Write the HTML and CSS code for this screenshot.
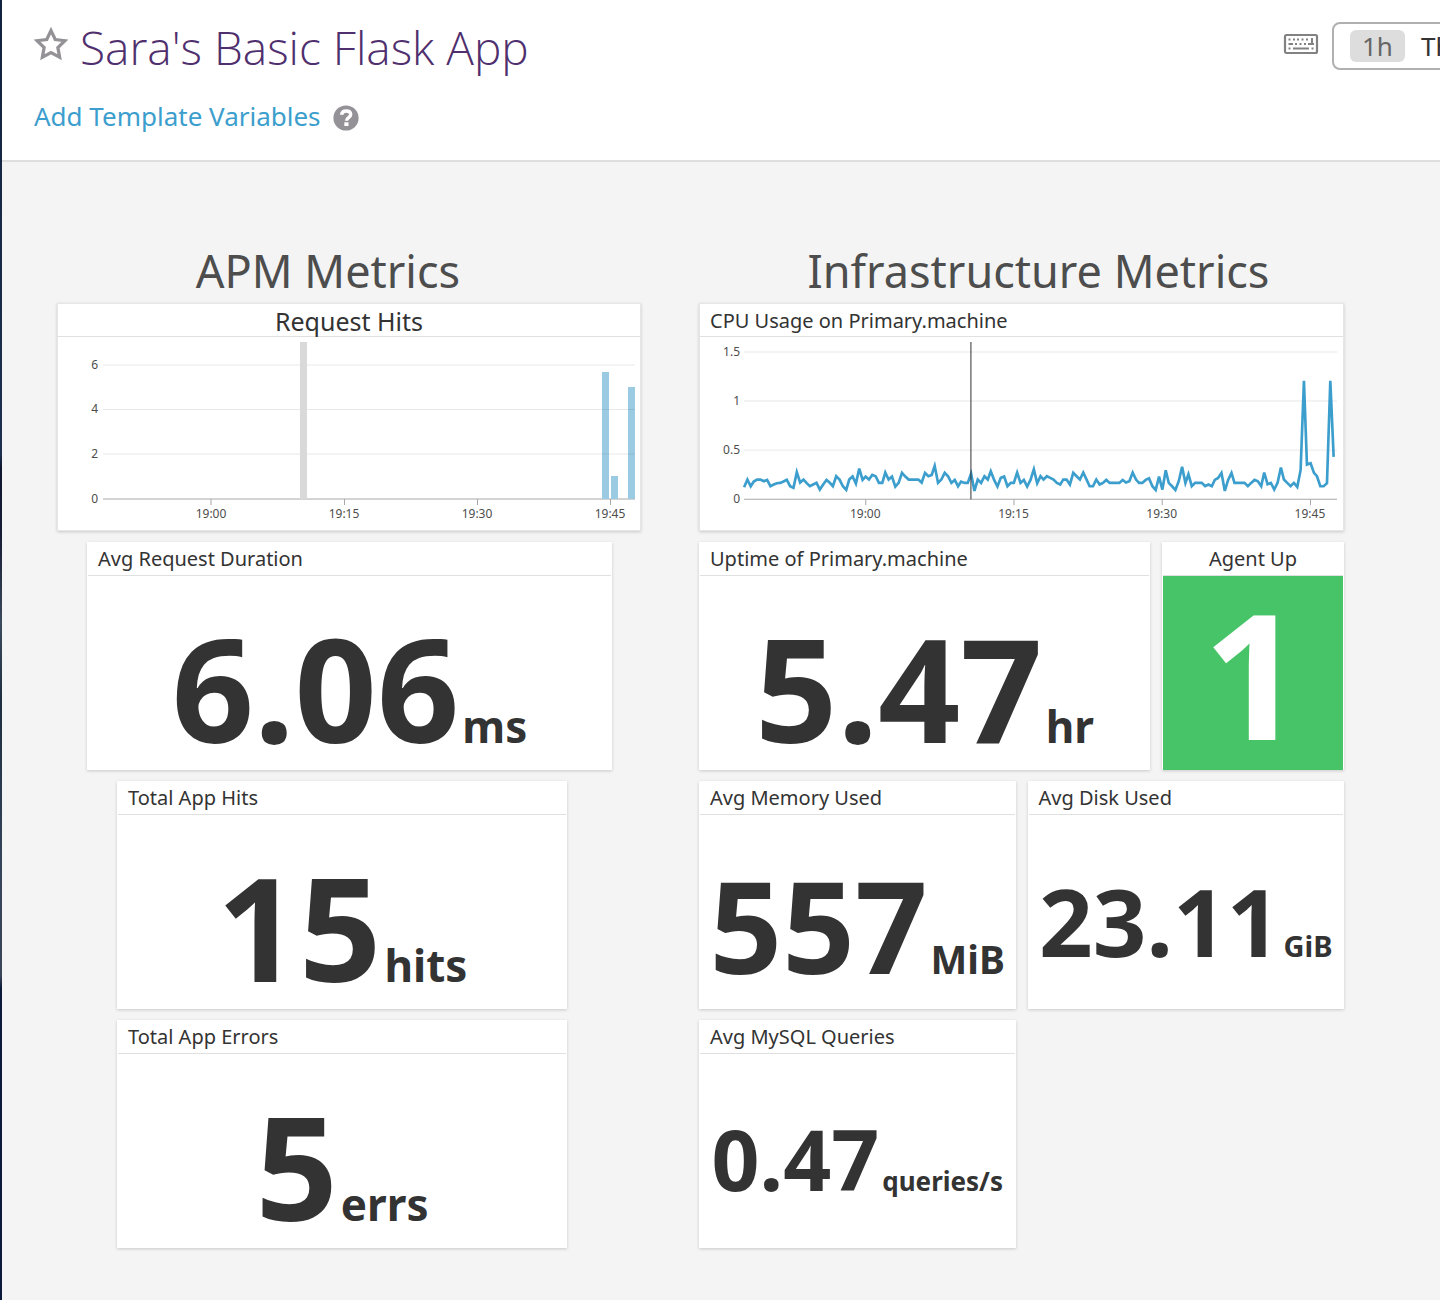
FILE: index.html
```html
<!DOCTYPE html>
<html lang="en">
<head>
<meta charset="utf-8">
<meta name="viewport" content="width=device-width, initial-scale=1">
<title>Sara's Basic Flask App</title>
<link rel="stylesheet" href="styles.css">
</head>
<body>
<div class="app">
  <header class="header">
    <div class="title-row">
      <button class="icon-button star" type="button" aria-label="Favorite dashboard">
        <svg width="34" height="36" viewBox="1.500 1 31 33"><path d="M17 5.200l3.900 8.200 8.900 1.100-6.500 6.200 1.600 8.900-7.900-4.300-7.900 4.300 1.600-8.900-6.500-6.200 8.900-1.100z" fill="none" stroke="#949296" stroke-width="3"/></svg>
      </button>
      <h1 class="title">Sara's Basic Flask App</h1>
      <div class="toolbar">
        <button class="icon-button" type="button" aria-label="Keyboard shortcuts">
          <svg width="36" height="22" viewBox="0 0 36 22">
            <rect x="2" y="2" width="32" height="18" rx="1.500" fill="#fff" stroke="#828282" stroke-width="2.200"/>
            <path d="M5.500 6.500h2m2.500 0h2m2 0h2m2.500 0h2m2.500 0h2M5.500 11h4.500m2 0h2m2.500 0h2m2.500 0h2m2 0h6M29 5v7M5.500 15.500h2m2.500 0h16m2.500 0h2" fill="none" stroke="#828282" stroke-width="2"/>
          </svg>
        </button>
        <button class="time-range" type="button"><span class="time-tag">1h</span><span>The Past Hour</span></button>
      </div>
    </div>
    <div class="variables">
      <a class="variables-link" href="#variables">Add Template Variables</a>
      <svg width="26" height="26" viewBox="0 0 26 26" role="img" aria-label="Help"><circle cx="13" cy="13" r="12.600" fill="#949296"/><path d="M8.500 9.800C9 6.800 11 6 13.200 6c2.600 0 4.500 1.300 4.500 3.600 0 3.200-4.200 3-4.200 6.200" fill="none" stroke="#fff" stroke-width="3.400"/><path d="M11.300 17.300h4.200v3.700h-4.200z" fill="#fff"/></svg>
    </div>
  </header>

  <main class="board">
    <section class="group">
      <h2 class="group-title">APM Metrics</h2>
      <article class="widget framed">
        <h3 class="widget-title large">Request Hits</h3>
        <svg class="chart" viewBox="-1 -1 582 191" role="img" aria-label="Request hits over time">
          <path d="M44 27h532M44 71.500h532M44 116h532" stroke="#e8e8e8"/>
          <path d="M44 161h532M152 161v6M285.500 161v6M418.500 161v6M551.500 161v6" stroke="#a8a8a8"/>
          <path d="M241 4h7v157h-7z" fill="#d9d9d9"/>
          <path d="M543 34h7v127h-7zM552 138h7v23h-7zM569 49h7v112h-7z" fill="#9bcbe2"/>
          <path d="M543 71.500h7M569 71.500h7M543 116h7M569 116h7" stroke="#8dbbd1"/>
          <g class="tick y"><text x="39" y="31">6</text><text x="39" y="75">4</text><text x="39" y="120">2</text><text x="39" y="165">0</text></g>
          <g class="tick x"><text x="152" y="180">19:00</text><text x="285" y="180">19:15</text><text x="418" y="180">19:30</text><text x="551" y="180">19:45</text></g>
        </svg>
      </article>
      <article class="widget inset">
        <h3 class="widget-title">Avg Request Duration</h3>
        <p class="value size-xl">6.06<span class="unit">ms</span></p>
      </article>
      <article class="widget inset-deep">
        <h3 class="widget-title">Total App Hits</h3>
        <p class="value size-xl">15<span class="unit">hits</span></p>
      </article>
      <article class="widget inset-deep">
        <h3 class="widget-title">Total App Errors</h3>
        <p class="value size-xl">5<span class="unit">errs</span></p>
      </article>
    </section>

    <section class="group">
      <h2 class="group-title wide">Infrastructure Metrics</h2>
      <article class="widget framed">
        <h3 class="widget-title">CPU Usage on Primary.machine</h3>
        <svg class="chart" viewBox="-1 -1 642 191" role="img" aria-label="CPU usage over time">
          <path d="M43 14h592M43 63h592M43 112h592" stroke="#f3f3f3" stroke-width="2"/>
          <path d="M43 161h592M164.500 161v6M312.500 161v6M460.500 161v6M608.500 161v6" stroke="#a8a8a8"/>
          <svg x="-11" y="-48" width="680" height="250" viewBox="0 0 2040 750">
            <polyline fill="none" stroke="#3c9ecd" stroke-width="8" points="162,591 172,568 182,588 191,574 201,568 211,568 221,573 231,569 241,588 251,583 260,579 270,578 280,574 290,569 300,588 310,593 320,546 330,577 340,568 349,578 359,588 369,583 379,578 389,598 399,583 409,569 418,577 428,588 438,558 448,568 458,588 468,599 477,568 487,559 497,580 507,535 517,569 526,559 536,568 546,554 556,558 566,578 576,578 585,547 595,568 605,559 615,589 625,578 635,548 645,559 655,568 684,568 694,577 704,548 714,558 724,554 733,527 743,578 753,568 763,548 773,558 783,578 793,569 803,588 812,574 822,578 832,578 842,550 852,602 862,568 872,578 882,558 892,568 901,543 911,569 921,589 931,563 941,559 951,588 961,578 970,578 980,547 990,578 1000,569 1010,589 1020,569 1030,537 1040,579 1050,558 1059,568 1069,558 1079,563 1089,568 1099,578 1109,583 1118,568 1128,568 1138,583 1148,548 1158,558 1168,568 1178,547 1188,568 1197,588 1207,588 1217,568 1227,583 1237,578 1247,569 1257,578 1286,578 1296,569 1306,577 1316,573 1326,547 1336,568 1345,578 1355,578 1365,569 1375,564 1385,588 1395,599 1405,559 1415,598 1425,540 1434,578 1444,588 1454,599 1464,573 1474,530 1484,578 1493,552 1503,588 1513,578 1533,578 1543,588 1553,583 1563,588 1572,569 1582,563 1592,548 1602,602 1612,569 1622,548 1631,578 1661,578 1671,588 1681,578 1691,569 1701,573 1711,588 1720,547 1730,582 1740,578 1750,598 1760,578 1770,532 1779,568 1789,578 1799,588 1809,578 1819,590 1829,540 1839,272 1848,523 1859,519 1869,548 1878,558 1888,588 1898,588 1908,579 1918,272 1928,500"/>
          </svg>
          <path d="M269.500 4v157" stroke="#333"/>
          <g class="tick y"><text x="39" y="18">1.5</text><text x="39" y="67">1</text><text x="39" y="116">0.5</text><text x="39" y="165">0</text></g>
          <g class="tick x"><text x="164" y="180">19:00</text><text x="312" y="180">19:15</text><text x="460" y="180">19:30</text><text x="608" y="180">19:45</text></g>
        </svg>
      </article>
      <div class="row uptime-row">
        <article class="widget">
          <h3 class="widget-title">Uptime of Primary.machine</h3>
          <p class="value size-xl">5.47<span class="unit">hr</span></p>
        </article>
        <article class="widget">
          <h3 class="widget-title centered">Agent Up</h3>
          <p class="value status-ok">1</p>
        </article>
      </div>
      <div class="row">
        <article class="widget">
          <h3 class="widget-title">Avg Memory Used</h3>
          <p class="value size-lg">557<span class="unit">MiB</span></p>
        </article>
        <article class="widget">
          <h3 class="widget-title">Avg Disk Used</h3>
          <p class="value size-md">23.11<span class="unit">GiB</span></p>
        </article>
      </div>
      <div class="row">
        <article class="widget">
          <h3 class="widget-title">Avg MySQL Queries</h3>
          <p class="value size-sm">0.47<span class="unit">queries/s</span></p>
        </article>
      </div>
    </section>
  </main>
</div>
</body>
</html>
```
FILE: styles.css
```css
* { box-sizing: border-box; }

body {
  margin: 0;
  background: #f4f4f4;
  color: #333;
  font-family: "Noto Sans", "Open Sans", sans-serif;
}

h1, h2, h3, p { margin: 0; font-weight: 400; }

button { font: inherit; color: inherit; }

svg { display: block; }

.app {
  min-height: 100vh;
  border-left: 2px solid #1b2940;
  border-image: linear-gradient(#12233f 0%, #1c2f4e 35%, #0f1730 36%, #161c34 41%, #3b4a5c 48%, #1f2d40 54%, #35435a 66%, #3a4658 75%, #0b1a3a 76%, #0b1a3a 100%) 1;
  overflow: hidden;
}

.header {
  height: 162px;
  padding: 16px 0 0 32px;
  background: #fff;
  border-bottom: 2px solid #dedede;
}

.title-row {
  display: flex;
  align-items: flex-start;
  height: 80px;
}

.icon-button {
  flex: none;
  padding: 0;
  border: 0;
  background: none;
}

.star { margin: 10px 12px 0 0; }

.title {
  color: #4f2f6d;
  font-family: "Open Sans", "Noto Sans", sans-serif;
  font-size: 46px;
  font-weight: 300;
  line-height: 62px;
  white-space: nowrap;
}

.toolbar {
  display: flex;
  flex: 0 0 157px;
  gap: 13px;
  align-items: center;
  margin: 6px 0 0 auto;
  overflow: hidden;
}

.toolbar .icon-button { margin-bottom: 4px; }

.time-range {
  display: flex;
  flex: none;
  gap: 16px;
  align-items: center;
  height: 48px;
  padding: 0 16px;
  border: 2px solid #b0b0b0;
  border-radius: 8px;
  background: #fff;
  font-size: 26px;
  line-height: 32px;
}

.time-tag {
  padding: 0 12px;
  border-radius: 6px;
  background: #ddd;
  color: #666;
}

.variables {
  display: flex;
  gap: 12px;
  align-items: center;
  height: 43px;
}

.variables-link {
  padding-bottom: 3px;
  color: #3c9ecd;
  font-size: 26px;
  line-height: 40px;
  text-decoration: none;
}

.board {
  display: grid;
  grid-template-columns: 584fr 645fr;
  gap: 58px;
  padding: 78px 96px 52px 55px;
}

.group {
  display: flex;
  flex-direction: column;
  gap: 11px;
  min-width: 0;
}

.group-title {
  margin-bottom: -11px;
  padding-right: 42px;
  color: #4d4d4d;
  font-size: 45px;
  line-height: 62px;
  text-align: center;
  white-space: nowrap;
}

.group-title.wide { padding-right: 0; padding-left: 34px; }

.widget {
  display: flex;
  flex-direction: column;
  min-width: 0;
  min-height: 228px;
  background: #fff;
  box-shadow: 0 1px 3px rgba(0, 0, 0, 0.18);
}

.framed {
  margin-top: 1px;
  border: 1px solid #e6e6e6;
}

.inset { margin: 0 29px 0 30px; }
.inset-deep { margin: 0 74px 0 60px; }

.widget-title {
  height: 34px;
  margin: 0 1px;
  padding: 0 10px;
  border-bottom: 1px solid #e0e0e0;
  font-size: 20px;
  line-height: 34px;
  white-space: nowrap;
}

.framed .widget-title {
  flex: none;
  height: 33px;
  margin: 0;
  line-height: 33px;
}

.framed .large {
  font-size: 25px;
  line-height: 34px;
  text-align: center;
}

.centered { text-align: center; }

.chart { width: 100%; height: auto; }

.tick text {
  fill: #4d4d4d;
  font-size: 12px;
}

.y text { text-anchor: end; }
.x text { text-anchor: middle; }

.row {
  display: grid;
  grid-template-columns: 1fr 1fr;
  gap: 12px;
}

.uptime-row { grid-template-columns: 451fr 182fr; }

.value {
  display: flex;
  flex: 1;
  gap: 3px;
  align-items: baseline;
  justify-content: center;
  max-height: 194px;
  font-weight: 700;
  white-space: nowrap;
}

.unit { line-height: 1; }

.size-xl { font-size: 144px; line-height: 222px; }
.size-xl .unit { font-size: 44px; }
.size-lg { font-size: 127px; line-height: 220px; }
.size-lg .unit { font-size: 39px; }
.size-md { font-size: 94px; line-height: 212px; }
.size-md .unit { font-size: 29px; }
.size-sm { font-size: 84px; line-height: 210px; }
.size-sm .unit { font-size: 26px; }

.status-ok {
  margin: 0 1px;
  background: #48c468;
  color: #fff;
  font-size: 175px;
  line-height: 192px;
}
```
